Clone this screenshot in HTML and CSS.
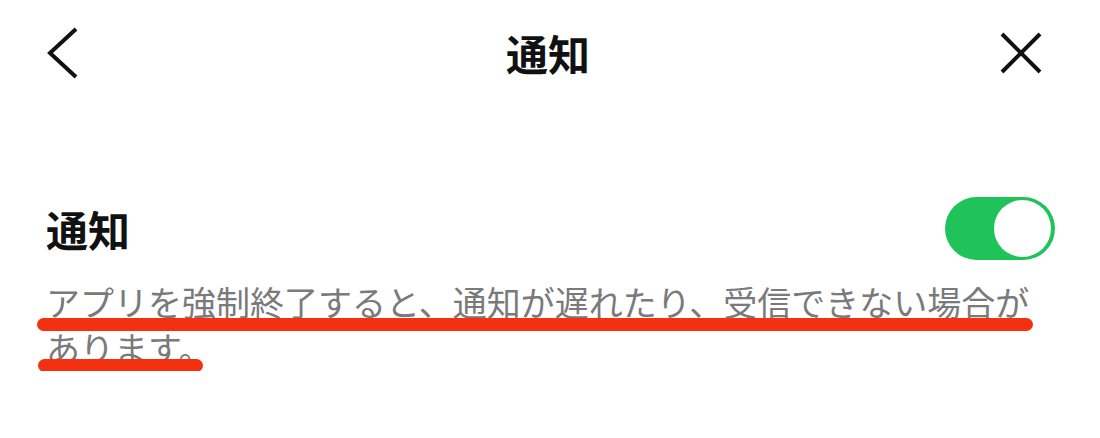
FILE: index.html
```html
<!DOCTYPE html>
<html lang="ja">
<head>
  <meta charset="UTF-8">
  <meta name="viewport" content="width=device-width, initial-scale=1.0">
  <title>通知</title>
  <link rel="stylesheet" href="styles.css">
</head>
<body>
  <header class="topbar">
    <button class="icon-btn back" aria-label="戻る">
      <svg width="34" height="54" viewBox="0 0 34 54">
        <path d="M30 3 L4 27 L30 51" fill="none" stroke="#111" stroke-width="4"/>
      </svg>
    </button>
    <h1 class="title">通知</h1>
    <button class="icon-btn close" aria-label="閉じる">
      <svg width="44" height="44" viewBox="0 0 44 44">
        <path d="M3 3 L41 41 M41 3 L3 41" fill="none" stroke="#111" stroke-width="4"/>
      </svg>
    </button>
  </header>

  <section class="setting">
    <div class="setting-row">
      <span class="setting-label">通知</span>
      <div class="toggle on"><div class="knob"></div></div>
    </div>
    <div class="note">
      <p>アプリを強制終了すると、通知が遅れたり、受信できない場合があります。</p>
      <!-- マーカー線 -->
      <span class="mark mark-1"></span>
      <span class="mark mark-2"></span>
    </div>
  </section>
</body>
</html>
```

FILE: styles.css
```css
body {
  margin: 0;
  background: #fff;
  font-family: "Noto Sans CJK JP", "Noto Sans", sans-serif;
  color: #111;
}
.topbar {
  display: grid;
  grid-template-columns: 1fr auto 1fr;
  align-items: center;
  height: 106px;
}
.icon-btn {
  border: none;
  background: none;
  padding: 0;
  display: flex;
}
.icon-btn.back {
  justify-self: start;
  margin-left: 46px;
}
.icon-btn.close {
  justify-self: end;
  margin-right: 57px;
}
.title {
  margin: 0;
  font-size: 42px;
  font-weight: 700;
  line-height: 1;
  margin-right: 4px;
}
.setting {
  padding: 0 45px 0 46px;
  margin-top: 91px;
}
.setting-row {
  display: flex;
  justify-content: space-between;
  align-items: center;
}
.setting-label {
  font-size: 42px;
  font-weight: 700;
  line-height: 1;
}
.toggle {
  width: 110px;
  height: 63px;
  box-sizing: border-box;
  padding: 3px 4px;
  border-radius: 32px;
  background: #e0e0e0;
  display: flex;
  align-items: center;
}
.toggle.on {
  background: #1fc35a;
  justify-content: flex-end;
}
.knob {
  width: 57px;
  height: 57px;
  border-radius: 50%;
  background: #fff;
}
.note {
  position: relative;
  margin-top: 19px;
}
.note p {
  margin: 0;
  font-size: 34px;
  line-height: 46px;
  color: #7a7a7a;
}
.mark {
  position: absolute;
  height: 13px;
  border-radius: 7px;
  background: #f3300f;
}
.mark-1 { left: -9px; top: 39px; width: 996px; }
.mark-2 { left: -8px; top: 80px; width: 165px; }
```
